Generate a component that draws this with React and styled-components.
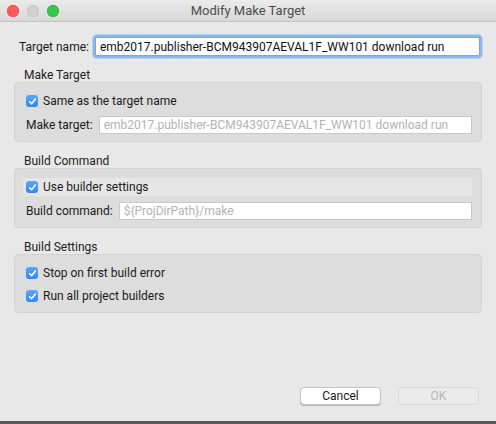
import React from "react";
import styled, { createGlobalStyle } from "styled-components";

const Global = createGlobalStyle`
  html, body { margin: 0; padding: 0; background: #e8e8e8; }
  body { font-family: Roboto, "Liberation Sans", Arial, sans-serif; font-size: 12px; color: #1a1a1a; }
`;

const Window = styled.div`
  width: 496px;
  height: 424px;
  display: flex;
  flex-direction: column;
  background: #e8e8e8;
  overflow: hidden;
`;

const TitleBar = styled.div`
  height: 22px;
  flex: none;
  display: flex;
  align-items: center;
  position: relative;
  background: linear-gradient(#ebebeb, #d8d8d8);
  border-bottom: 1px solid #c4c4c4;
  box-sizing: border-box;
`;

const Lights = styled.div`
  display: flex;
  gap: 8px;
  padding-left: 7px;
`;

const Light = styled.span`
  width: 12px;
  height: 12px;
  border-radius: 50%;
  background: ${(p) => p.$c};
  box-shadow: inset 0 0 0 0.5px ${(p) => p.$b};
`;

const Title = styled.div`
  position: absolute;
  left: 0;
  right: 0;
  text-align: center;
  font-size: 13px;
  color: #4d4d4d;
  pointer-events: none;
`;

const Content = styled.div`
  flex: 1;
  display: flex;
  flex-direction: column;
  padding: 15px 14px 0 14px;
`;

const TopRow = styled.div`
  display: flex;
  align-items: center;
  padding-left: 5px;
  padding-right: 2px;
  height: 19px;
`;

const Label = styled.span`
  white-space: nowrap;
  margin-right: 6px;
`;

const Input = styled.div`
  flex: 1;
  height: ${(p) => (p.$focus ? 19 : 18)}px;
  box-sizing: border-box;
  background: #fff;
  border: 1px solid ${(p) => (p.$focus ? "#7aa7e0" : "#c9c9c9")};
  box-shadow: ${(p) => (p.$focus ? "0 0 0 2.5px #8bb7f0" : "none")};
  border-radius: ${(p) => (p.$focus ? 2 : 0)}px;
  display: flex;
  align-items: center;
  padding-left: 4px;
  color: ${(p) => (p.$muted ? "#b3b3b3" : "#111")};
  white-space: nowrap;
  overflow: hidden;
`;

const SectionTitle = styled.div`
  margin-top: ${(p) => p.$mt}px;
  padding-left: 10px;
  height: 14px;
  line-height: 14px;
  color: #222;
`;

const Group = styled.div`
  background: #dddddd;
  border: 1px solid #d2d2d2;
  border-radius: 4px;
  padding: 9px 9px 7px 8px;
  display: flex;
  flex-direction: column;
  gap: ${(p) => p.$gap || 6}px;
`;

const CheckRow = styled.label`
  display: flex;
  align-items: center;
  height: 18px;
  padding-left: 3px;
  background: ${(p) => (p.$hl ? "#e6e6e6" : "transparent")};
`;

const Box = styled.span`
  width: 12px;
  height: 12px;
  border-radius: 3px;
  background: linear-gradient(#5aa8fb, #2f86f6);
  display: flex;
  align-items: center;
  justify-content: center;
  margin-right: 5px;
  flex: none;
`;

const FieldRow = styled.div`
  display: flex;
  align-items: center;
  padding-left: 3px;
  height: 18px;
`;

const Spacer = styled.div`
  flex: 1;
`;

const Buttons = styled.div`
  display: flex;
  justify-content: flex-end;
  gap: 17px;
  padding-right: 3px;
  margin-bottom: 16px;
`;

const Button = styled.div`
  width: 81px;
  height: 18px;
  box-sizing: border-box;
  border-radius: 4px;
  display: flex;
  align-items: center;
  justify-content: center;
  background: ${(p) => (p.$disabled ? "#ebebeb" : "#fff")};
  border: 1px solid ${(p) => (p.$disabled ? "#dadada" : "#c3c3c3")};
  box-shadow: ${(p) => (p.$disabled ? "none" : "0 1px 0 #b8b8b8")};
  color: ${(p) => (p.$disabled ? "#b5b5b5" : "#1a1a1a")};
`;

const BottomEdge = styled.div`
  height: 3px;
  flex: none;
  background: #595959;
`;

const Check = () => (
  <Box>
    <svg width="9" height="9" viewBox="0 0 9 9">
      <path d="M1.6 4.8 L3.6 6.8 L7.4 2" fill="none" stroke="#fff" strokeWidth="1.6" strokeLinecap="round" strokeLinejoin="round" />
    </svg>
  </Box>
);

const longName = "emb2017.publisher-BCM943907AEVAL1F_WW101 download run";

export default function App() {
  return (
    <>
      <Global />
      <Window>
        <TitleBar>
          <Lights>
            <Light $c="#fc5b57" $b="#e2463f" />
            <Light $c="#d0d0d0" $b="#bdbdbd" />
            <Light $c="#34c84a" $b="#2aac39" />
          </Lights>
          <Title>Modify Make Target</Title>
        </TitleBar>
        <Content>
          <TopRow>
            <Label>Target name:</Label>
            <Input $focus>{longName}</Input>
          </TopRow>

          <SectionTitle $mt={12}>Make Target</SectionTitle>
          <Group>
            <CheckRow>
              <Check />
              Same as the target name
            </CheckRow>
            <FieldRow>
              <Label>Make target:</Label>
              <Input $muted>{longName}</Input>
            </FieldRow>
          </Group>

          <SectionTitle $mt={12}>Build Command</SectionTitle>
          <Group>
            <CheckRow $hl>
              <Check />
              Use builder settings
            </CheckRow>
            <FieldRow>
              <Label>Build command:</Label>
              <Input $muted>{"${ProjDirPath}/make"}</Input>
            </FieldRow>
          </Group>

          <SectionTitle $mt={12}>Build Settings</SectionTitle>
          <Group $gap={5}>
            <CheckRow>
              <Check />
              Stop on first build error
            </CheckRow>
            <CheckRow>
              <Check />
              Run all project builders
            </CheckRow>
          </Group>

          <Spacer />
          <Buttons>
            <Button>Cancel</Button>
            <Button $disabled>OK</Button>
          </Buttons>
        </Content>
        <BottomEdge />
      </Window>
    </>
  );
}
